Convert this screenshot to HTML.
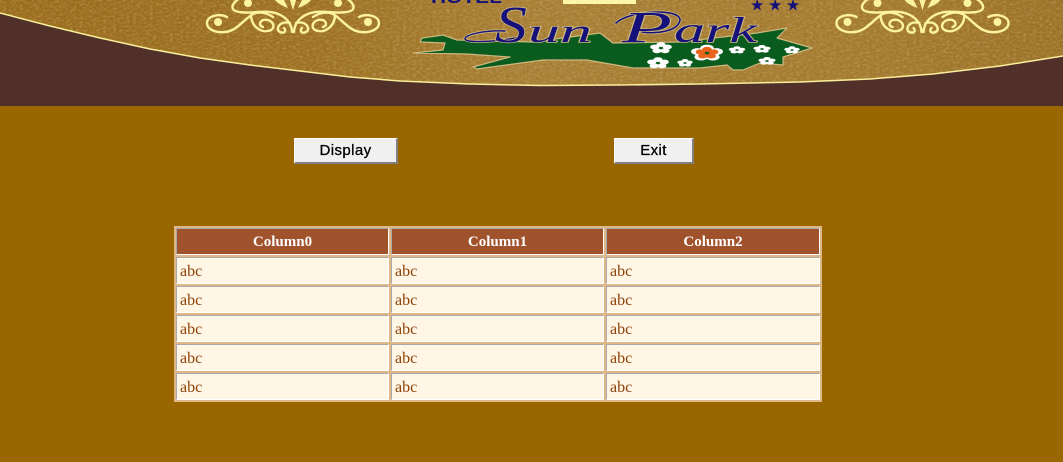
<!DOCTYPE html>
<html lang="en">
<head>
<meta charset="utf-8">
<title>Hotel Sun Park</title>
<style>
html,body{margin:0;padding:0;width:1063px;height:462px;overflow:hidden;background:#996600}
#hdr{position:absolute;left:0;top:0;display:block}
.btn{position:absolute;top:138px;height:26px;box-sizing:border-box;padding:0;margin:0;background:#f0f0f0;
 border:1px solid;border-color:#fff #808080 #808080 #fff;border-right-width:2px;border-bottom-width:2px;
 font:15px/22px "Liberation Sans",sans-serif;color:#000;letter-spacing:.4px;text-align:center;-webkit-text-stroke:.3px #000}
table{position:absolute;left:174px;top:226px;width:648px;border-collapse:separate;border-spacing:2px;background:#deb887;table-layout:fixed}
td,th{box-sizing:border-box;height:27px;padding:2px 0 0 3px;border:1px solid;border-color:#a9a9a9 #fff #fff #a9a9a9;
 font-family:"Liberation Serif",serif;vertical-align:middle}
th{background:#a0522d;color:#fff;font-size:15px;font-weight:bold;text-align:center;padding:2px 0 0 0}
td{background:#fff6e6;color:#8f4208;font-size:16px;text-align:left}
</style>
</head>
<body>
<svg id="hdr" width="1063" height="106" viewBox="0 0 1063 106" xmlns="http://www.w3.org/2000/svg">
<defs>
<linearGradient id="g" x1="0" x2="1" y1="0" y2="0">
<stop offset="0" stop-color="#9a6a18"/><stop offset=".3" stop-color="#9e7020"/><stop offset=".5" stop-color="#aa8036"/><stop offset=".8" stop-color="#a67b30"/><stop offset="1" stop-color="#9c7026"/>
</linearGradient>
<filter id="n" x="0" y="0" width="100%" height="100%">
<feTurbulence type="fractalNoise" baseFrequency=".28 .45" numOctaves="2" seed="4"/>
<feColorMatrix type="matrix" values="0 0 0 0 .3  0 0 0 0 .18  0 0 0 0 .03  1.6 1.6 0 0 -1.25"/>
<feComposite in2="SourceAlpha" operator="in"/>
</filter>
<filter id="m" x="0" y="0" width="100%" height="100%">
<feTurbulence type="fractalNoise" baseFrequency=".3 .5" numOctaves="2" seed="11"/>
<feColorMatrix type="matrix" values="0 0 0 0 .82  0 0 0 0 .62  0 0 0 0 .3  1.6 1.6 0 0 -1.35"/>
<feComposite in2="SourceAlpha" operator="in"/>
</filter>
<g id="o" fill="none" stroke="#fbf3a0" stroke-width="2.4" stroke-linecap="round">
<path d="M-66 17C-74 13-86 16-86 23C-86 30-76 33-68 32C-56 31-50 20-40 14C-34 11-26 13-20 17"/>
<path d="M-52-2C-58 0-62 6-60 9C-58 13-45 13-35 12C-25 11-15 12-8 18C-3 22-1 28-1 32"/>
<path d="M-42 16C-41 28-30 34-22 30C-16 26-22 18-30 20C-34 22-34 26-30 27"/>
<path d="M-3 23C-14 20-18 30-13 32C-9 34-6 31-9 28"/>
<circle cx="-75" cy="22" r="4" fill="#fbf3a0" stroke="none"/>
<circle cx="-45" cy="3" r="4" fill="#fbf3a0" stroke="none"/>
<path d="M-18 0L-9 0L-5 8C-10 6-15 4-18 0Z" fill="#fbf3a0" stroke="none"/>
<path d="M-3 0L3 0L0 10Z" fill="#fbf3a0" stroke="none"/>
</g>
<g id="f"><circle cx="0" cy="-3.4" r="2.4"/><circle cx="3.3" cy="-1" r="2.4"/><circle cx="2.1" cy="2.8" r="2.4"/><circle cx="-2.1" cy="2.8" r="2.4"/><circle cx="-3.3" cy="-1" r="2.4"/></g>
</defs>
<rect width="1063" height="106" fill="#51302a"/>
<path d="M0 13L50 26L100 38L150 49L200 58L250 65L300 71L350 77L400 81L470 84L540 85.5L620 85L700 84L800 82L870 79L933 74L1000 66L1063 56V0H0Z" fill="url(#g)"/>
<path d="M0 13L50 26L100 38L150 49L200 58L250 65L300 71L350 77L400 81L470 84L540 85.5L620 85L700 84L800 82L870 79L933 74L1000 66L1063 56V0H0Z" filter="url(#n)" opacity=".5"/>
<path d="M0 13L50 26L100 38L150 49L200 58L250 65L300 71L350 77L400 81L470 84L540 85.5L620 85L700 84L800 82L870 79L933 74L1000 66L1063 56V0H0Z" filter="url(#m)" opacity=".28"/>
<path d="M0 13L50 26L100 38L150 49L200 58L250 65L300 71L350 77L400 81L470 84L540 85.5L620 85L700 84L800 82L870 79L933 74L1000 66L1063 56" fill="none" stroke="#f8ee9c" stroke-width="1.5" stroke-linejoin="round"/>

<use href="#o" transform="translate(293 0)"/>
<use href="#o" transform="translate(293 0) scale(-1 1)"/>
<use href="#o" transform="translate(922.5 0)"/>
<use href="#o" transform="translate(922.5 0) scale(-1 1)"/>

<path d="M413 53L443 50L445 43L420 42L422 38L443 35L457 40L533 42L600 33L613 43L680 42L757 33L787 28L777 38L812 48L783 57L783 65L760 63L743 70L733 70L727 65L700 68L633 68L587 60L543 60L477 69L473 67L510 57L467 54Z" fill="#0a5c1e" stroke="#cdb87f" stroke-width="1.2" stroke-linejoin="round"/>

<g fill="#fff">
<use href="#f" transform="translate(661 48) scale(1.9 1)"/>
<use href="#f" transform="translate(658 63) scale(1.9 1)"/>
<use href="#f" transform="translate(685 63) scale(1.35 .7)"/>
<use href="#f" transform="translate(737 50) scale(1.45 .65)"/>
<use href="#f" transform="translate(762 49) scale(1.5 .7)"/>
<use href="#f" transform="translate(792 50) scale(1.35 .65)"/>
<use href="#f" transform="translate(767 61) scale(1.5 .7)"/>
<use href="#f" transform="translate(707 53) scale(2.8 1.45)"/>
</g>
<use href="#f" transform="translate(707 53) scale(2 1.05)" fill="#e8641c"/>

<g fill="none" stroke-linecap="round">
<path d="M505 31C484 30 464 35 465 39C467 43 490 42 516 38" stroke="#cdb87f" stroke-width="3"/>
<path d="M505 31C484 30 464 35 465 39C467 43 490 42 516 38" stroke="#15107a" stroke-width="1.4"/>
<path d="M616 23C630 10 680 8 680 20C678 32 655 34 642 32" stroke="#cdb87f" stroke-width="3"/>
<path d="M616 23C630 10 680 8 680 20C678 32 655 34 642 32" stroke="#15107a" stroke-width="1.6"/>
</g>
<g font-family="'Liberation Serif',serif" font-style="italic" fill="#15107a" stroke="#cdb87f" stroke-width="1.4" paint-order="stroke">
<text x="495" y="42" font-size="52" textLength="32" lengthAdjust="spacingAndGlyphs">S</text>
<text x="528" y="42" font-size="33" textLength="64" lengthAdjust="spacingAndGlyphs">un</text>
<text x="622" y="42" font-size="44" textLength="50" lengthAdjust="spacingAndGlyphs">P</text>
<text x="674" y="42" font-size="36" textLength="83" lengthAdjust="spacingAndGlyphs">ark</text>
</g>
<text x="431" y="3" font-family="'Liberation Sans',sans-serif" font-weight="bold" font-size="17" fill="#15107a" textLength="71" lengthAdjust="spacingAndGlyphs">HOTEL</text>
<rect x="563" y="0" width="73" height="4" fill="#fdf5a8"/>
<text x="750" y="10.5" font-family="'DejaVu Sans',sans-serif" font-size="16" fill="#15107a" letter-spacing="3.6">★★★</text>
</svg>

<button class="btn" style="left:294px;width:104px">Display</button>
<button class="btn" style="left:614px;width:80px">Exit</button>

<table>
<colgroup><col style="width:213px"><col style="width:213px"><col style="width:214px"></colgroup>
<tr><th>Column0</th><th>Column1</th><th>Column2</th></tr>
<tr><td>abc</td><td>abc</td><td>abc</td></tr>
<tr><td>abc</td><td>abc</td><td>abc</td></tr>
<tr><td>abc</td><td>abc</td><td>abc</td></tr>
<tr><td>abc</td><td>abc</td><td>abc</td></tr>
<tr><td>abc</td><td>abc</td><td>abc</td></tr>
</table>
</body>
</html>
